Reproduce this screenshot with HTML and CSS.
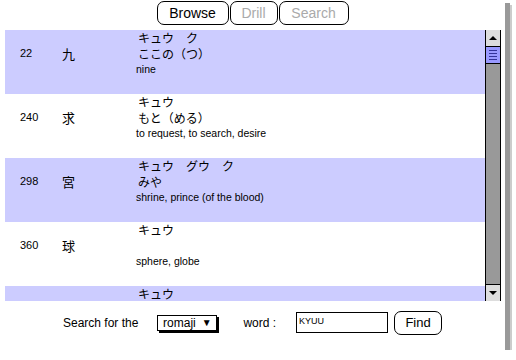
FILE: index.html
```html
<!DOCTYPE html>
<html lang="en">
<head>
  <meta charset="UTF-8" />
  <title>Kanji Browser</title>
  <link rel="stylesheet" href="styles.css">
</head>
<body>
  <div class="window">
    <div class="tabs">
      <button class="tab">Browse</button>
      <button class="tab off">Drill</button>
      <button class="tab off">Search</button>
    </div>

    <div class="list">
      <div class="rows">
        <div class="row shade">
          <div class="num">22</div>
          <div class="kanji">九</div>
          <div class="on">キュウ　ク</div>
          <div class="kun">ここの（つ）</div>
          <div class="meaning">nine</div>
        </div>
        <div class="row">
          <div class="num">240</div>
          <div class="kanji">求</div>
          <div class="on">キュウ</div>
          <div class="kun">もと（める）</div>
          <div class="meaning">to request, to search, desire</div>
        </div>
        <div class="row shade">
          <div class="num">298</div>
          <div class="kanji">宮</div>
          <div class="on">キュウ　グウ　ク</div>
          <div class="kun">みや</div>
          <div class="meaning">shrine, prince (of the blood)</div>
        </div>
        <div class="row">
          <div class="num">360</div>
          <div class="kanji">球</div>
          <div class="on">キュウ</div>
          <div class="kun"></div>
          <div class="meaning">sphere, globe</div>
        </div>
        <div class="row shade">
          <div class="num"></div>
          <div class="kanji"></div>
          <div class="on">キュウ</div>
          <div class="kun"></div>
          <div class="meaning"></div>
        </div>
      </div>

      <div class="scrollbar">
        <div class="arrow up"></div>
        <div class="thumb">
          <span></span><span></span><span></span><span></span>
        </div>
        <div class="track"></div>
        <div class="arrow down"></div>
      </div>
    </div>

    <div class="search">
      <span class="label">Search for the</span>
      <div class="popup">romaji <span class="tri">▼</span></div>
      <span class="label word">word :</span>
      <div class="field">KYUU</div>
      <button class="find">Find</button>
    </div>
  </div>
</body>
</html>
```

FILE: styles.css
```css
body {
  margin: 0;
  background-color: #ffffff;
  font-family: "Liberation Sans", Arial, "Noto Sans CJK JP", sans-serif;
  color: #000000;
}

.window {
  width: 505px;
  height: 350px;
  background-color: #ffffff;
  box-shadow: 5px 3px 0 #999999, 7px 5px 0 #cccccc;
  display: flex;
  flex-direction: column;
}

/* top tab buttons */
.tabs {
  height: 30px;
  display: flex;
  justify-content: center;
  align-items: flex-start;
  gap: 1px;
  padding-top: 1px;
  box-sizing: border-box;
}

.tab {
  height: 24px;
  padding: 0 10px;
  font-family: "Liberation Sans", Arial, sans-serif;
  font-size: 14px;
  background-color: #ffffff;
  border: 1px solid #000000;
  border-radius: 7px;
  color: #000000;
}

.tab:first-child {
  width: 72px;
}

.tab.off {
  color: #aaaaaa;
  width: 48px;
}

.tab.off:last-child {
  width: 70px;
}

/* kanji list */
.list {
  margin-left: 5px;
  width: 496px;
  height: 271px;
  display: flex;
  overflow: hidden;
}

.rows {
  flex: 1;
  overflow: hidden;
}

.row {
  height: 64px;
  display: grid;
  grid-template-columns: 42px 74px 1fr;
  grid-template-rows: 15px 16px 16px;
  padding-left: 15px;
  box-sizing: border-box;
  align-items: center;
}

.row.shade {
  background-color: #ccccff;
}

.num {
  grid-column: 1;
  grid-row: 2;
  font-size: 11px;
}

.kanji {
  grid-column: 2;
  grid-row: 2;
  font-family: "Noto Sans CJK JP", sans-serif;
  font-size: 13px;
}

.on,
.kun {
  grid-column: 3;
  font-family: "Noto Sans CJK JP", sans-serif;
  font-size: 12px;
  padding-left: 2px;
}

.on {
  grid-row: 1;
}

.kun {
  grid-row: 2;
}

.meaning {
  grid-column: 3;
  grid-row: 3;
  font-size: 10.5px;
}

/* scrollbar */
.scrollbar {
  width: 16px;
  display: flex;
  flex-direction: column;
  border-left: 1px solid #000000;
  border-right: 1px solid #000000;
  box-sizing: border-box;
}

.arrow {
  height: 16px;
  background-color: #dddddd;
  display: flex;
  align-items: center;
  justify-content: center;
}

.arrow::before {
  content: "";
  border-left: 4px solid transparent;
  border-right: 4px solid transparent;
}

.arrow.up {
  border-bottom: 1px solid #000000;
}

.arrow.up::before {
  border-bottom: 4px solid #000000;
}

.arrow.down {
  border-top: 1px solid #000000;
}

.arrow.down::before {
  border-top: 4px solid #000000;
}

.thumb {
  height: 16px;
  background-color: #9999ff;
  border-bottom: 1px solid #000000;
  display: flex;
  flex-direction: column;
  justify-content: center;
  gap: 2px;
  padding: 0 3px;
}

.thumb span {
  height: 1px;
  background-color: #333399;
}

.track {
  flex: 1;
  background-color: #999999;
}

/* search bar */
.search {
  flex: 1;
  display: flex;
  align-items: center;
  padding-left: 63px;
  padding-bottom: 6px;
  font-size: 12px;
}

.popup {
  margin-left: 19px;
  width: 58px;
  height: 14px;
  border: 1px solid #000000;
  box-shadow: 2px 2px 0 #000000;
  display: flex;
  align-items: center;
  justify-content: center;
  gap: 6px;
  font-size: 12px;
}

.tri {
  font-size: 10px;
}

.word {
  margin-left: 26px;
}

.field {
  margin-left: 20px;
  width: 92px;
  height: 21px;
  border: 1px solid #000000;
  font-size: 9px;
  padding: 3px 2px;
  box-sizing: border-box;
}

.find {
  margin-left: 6px;
  width: 48px;
  height: 24px;
  border: 1px solid #000000;
  border-radius: 7px;
  background-color: #ffffff;
  font-family: "Liberation Sans", Arial, sans-serif;
  font-size: 13px;
  padding: 0;
}
```
